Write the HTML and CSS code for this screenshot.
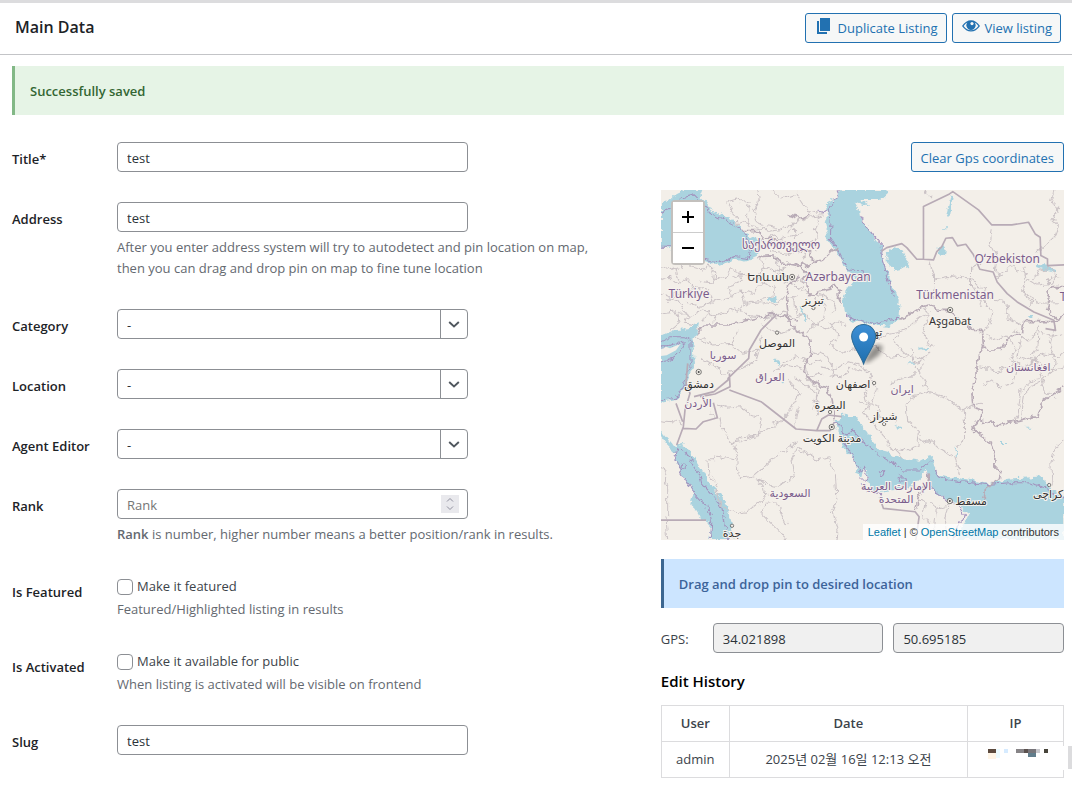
FILE: index.html
```html
<!DOCTYPE html>
<html lang="en">
<head>
<meta charset="utf-8">
<title>Main Data</title>
<meta name="viewport" content="width=device-width, initial-scale=1">
<link rel="stylesheet" href="styles.css">
</head>
<body>
<header class="panel-head">
  <h1 class="panel-title">Main Data</h1>
  <div class="actions">
    <button type="button" class="btn">
      <svg class="btn-icon" width="20" height="20" viewBox="0 0 20 20" aria-hidden="true"><path d="M6 2h10v13H6z"/><path d="M3 5h2v11h8v2H3z"/></svg>
      Duplicate Listing
    </button>
    <button type="button" class="btn">
      <svg class="btn-icon" width="20" height="20" viewBox="0 0 20 20" aria-hidden="true"><path fill-rule="evenodd" d="M1 10Q5 4.300 10 4.300T19 10Q15 15.500 10 15.500T1 10zM2.600 10Q6 14.300 10 14.300T17.400 10Q15.500 7.500 13.600 6.600A4.500 4.500 0 1 1 6.400 6.600Q4.500 7.500 2.600 10z"/><circle cx="10" cy="9.300" r="4"/><circle cx="11" cy="7.600" r="1.600" fill="#f6f7f7"/></svg>
      View listing
    </button>
  </div>
</header>
<main class="content">
  <p class="notice notice-success">Successfully saved</p>
  <div class="columns">
    <form class="fields">
      <div class="row">
        <label class="name" for="title">Title*</label>
        <div class="field"><input class="text" id="title" type="text" value="test"></div>
      </div>
      <div class="row">
        <label class="name" for="address">Address</label>
        <div class="field">
          <input class="text" id="address" type="text" value="test">
          <p class="hint">After you enter address system will try to autodetect and pin location on map, then you can drag and drop pin on map to fine tune location</p>
        </div>
      </div>
      <div class="row">
        <label class="name" for="category">Category</label>
        <div class="field"><div class="pick">
          <select class="text" id="category"><option>-</option></select>
          <svg class="pick-arrow" viewBox="0 0 27 28" aria-hidden="true"><path d="M8.500 12l5 4.500 5-4.500"/></svg>
        </div></div>
      </div>
      <div class="row">
        <label class="name" for="location">Location</label>
        <div class="field"><div class="pick">
          <select class="text" id="location"><option>-</option></select>
          <svg class="pick-arrow" viewBox="0 0 27 28" aria-hidden="true"><path d="M8.500 12l5 4.500 5-4.500"/></svg>
        </div></div>
      </div>
      <div class="row">
        <label class="name" for="agent">Agent Editor</label>
        <div class="field"><div class="pick">
          <select class="text" id="agent"><option>-</option></select>
          <svg class="pick-arrow" viewBox="0 0 27 28" aria-hidden="true"><path d="M8.500 12l5 4.500 5-4.500"/></svg>
        </div></div>
      </div>
      <div class="row">
        <label class="name" for="rank">Rank</label>
        <div class="field">
          <div class="pick">
            <input class="text" id="rank" type="number" placeholder="Rank">
            <svg class="spin" viewBox="0 0 18 18" aria-hidden="true"><path d="M6 6.500l3-3 3 3M6 11.500l3 3 3-3"/></svg>
          </div>
          <p class="hint"><strong>Rank</strong> is number, higher number means a better position/rank in results.</p>
        </div>
      </div>
      <div class="row">
        <label class="name" for="featured">Is Featured</label>
        <div class="field">
          <label class="check"><input class="box" id="featured" type="checkbox">Make it featured</label>
          <p class="hint hint-tight">Featured/Highlighted listing in results</p>
        </div>
      </div>
      <div class="row">
        <label class="name" for="activated">Is Activated</label>
        <div class="field">
          <label class="check"><input class="box" id="activated" type="checkbox">Make it available for public</label>
          <p class="hint hint-tight">When listing is activated will be visible on frontend</p>
        </div>
      </div>
      <div class="row">
        <label class="name" for="slug">Slug</label>
        <div class="field"><input class="text" id="slug" type="text" value="test"></div>
      </div>
    </form>

    <aside class="side">
      <button type="button" class="btn btn-clear">Clear Gps coordinates</button>
      <div class="map">
        <svg class="map-canvas" viewBox="0 0 403 350" preserveAspectRatio="xMidYMid slice" role="img" aria-label="Map">
          <defs>
            <linearGradient id="pin" x1="0" y1="0" x2="0" y2="1"><stop offset="0" stop-color="#3d8fd6"/><stop offset="1" stop-color="#1f6fae"/></linearGradient>
            <filter id="soft"><feGaussianBlur stdDeviation="2"/></filter>
            <filter id="rough" x="-5%" y="-5%" width="110%" height="110%">
              <feTurbulence type="fractalNoise" baseFrequency=".05" numOctaves="3" seed="4"/>
              <feDisplacementMap in="SourceGraphic" scale="22" xChannelSelector="R" yChannelSelector="G"/>
            </filter>
          </defs>
          <rect width="403" height="350" fill="#f3efe9"/>
          <g transform="scale(.33333)">
            <g class="water">
              <path d="M0 45L25 30 45 12 70 0H125L118 18 135 35 150 60 195 80 235 105 252 130 282 145 292 175 282 200 255 215 222 210 175 225 132 215 85 195 40 180 0 172z"/>
              <path d="M542 0L530 12 520 28 498 40 492 55 502 70 494 95 498 115 490 135 507 155 520 180 537 200 548 228 557 245 582 252 575 275 557 295 555 315 547 330 552 365 572 395 597 393 637 405 677 410 712 390 716 330 707 305 682 285 690 265 682 255 672 225 662 190 664 165 640 150 637 135 617 105 597 80 594 60 580 35 610 45 625 45 600 30 657 30 680 10 672 0z"/>
              <path d="M677 185L700 172 722 182 732 205 747 225 742 232 705 240 688 232 680 215z"/>
              <path d="M0 438L40 420 85 418 100 405 114 400 108 428 95 450 102 520 95 535 80 575 62 605 47 630 0 638z"/>
              <path d="M0 722L14 738 45 775 60 758 72 765 92 790 122 840 147 885 182 920 202 950 212 1000 217 1050H142L147 1010 132 990 112 975 100 955 88 945 97 910 72 870 55 838 47 820 42 785 20 765 0 738z"/>
              <path d="M522 690L540 682 552 670 562 678 585 678 597 700 617 730 635 755 657 780 677 785 697 800 737 806 777 812 795 802 812 798 822 840 837 858 897 865 940 872 977 880 1047 865 1100 862 1147 858 1157 880 1180 900 1209 920V1050H885L905 1010 924 970 897 950 877 935 857 925 827 910 812 890 802 870 797 840 787 848 777 865 747 890 700 900 657 905 625 900 617 840 607 835 600 865 590 850 582 810 565 795 545 770 540 740 530 720z"/>
              <path d="M868 20l8-5-10 62-6 4-4-8zM832 170l14-8 8 12-2 22-20-2-6-8zM325 325l20-5 10 6-12 12-8 0-12-5zM415 342l8 10 8 20 4 18-6-1-6-18zM1128 225l24 2 34 14-2 6-34-8-22-8zM840 115h18v3h-18zM775 473l32-2-2 8-22 0zM345 508l14 18-6 5-12-16zM1018 756h20v3h-20zM1090 710h26v3h-26zM883 775l5-2-1 30-3 0zM700 705l22 6 2 6-20-6zM740 520h22v4h-22zM362 577l8 4-8 3zM1100 378h12l2 6h-12z"/>
            </g>
            <path d="M0 478l15-8 12 5 32-14-14 20-28 15-17 2z" fill="#f3efe9"/>
            <g class="sealine">
              <path d="M0 70L30 50 60 25 100 15 125 40 150 70 190 90 225 108 245 122M245 122L262 150 272 178 258 205 220 200 175 216 130 208 80 188 30 172 0 172"/>
              <path d="M536 0L512 45 480 72 470 60M503 50L510 90 508 145 525 170 540 200 560 240 600 242 610 260"/>
              <path d="M597 75L615 105 640 140 664 165 662 195 672 230 676 260 690 300 700 320M552 375L575 385 600 388 640 402 712 385"/>
              <path d="M0 455L30 440 70 440 90 450 90 520 70 580 45 625 0 630M0 470L25 470 60 455 70 462 55 490 20 512 0 515"/>
              <path d="M48 775L42 800 60 850 95 905 118 930 140 950 150 985 145 1050M60 775L75 785 100 830 115 850 122 880 150 910 180 945 192 1000 200 1050"/>
              <circle cx="65" cy="830" r="8"/><circle cx="663" cy="852" r="8"/><circle cx="722" cy="868" r="8"/>
              <path d="M520 690L560 735 575 720 610 760 650 790 700 820 727 840 777 840 812 812 M822 840L837 865 900 875 977 883 1047 878 1100 878 1150 890 1209 930M797 850L815 895 850 925 890 948 910 972 890 1010 875 1050"/>
              <path d="M535 740L560 775 580 810 600 845 610 830 620 870 597 870M600 880L620 905 660 915"/>
            </g>
            <g class="minor">
              <path d="M200 35l30-8 12 10 18-2 8 25-12 18 10 25-18-8-20 8-2-22-12-14-14-32M290 0l5 30-18 35 20 40 70 10 28-10M330 0l30 28 45-15 30 45 45 15M380 130l20-30 35-18 45-4-20 40 12 25-22 10 20 30M300 150l40-15 25 12 60-20M320 165l12 20 48 8 25-18 30 10M400 115l5 55 30 15-8 20M265 110l60 14 40-6"/>
              <path d="M0 235l30-6 22 12 15-30M0 270l25-8 25 22 28-18 20 26-15 20-40 0-25 26M85 195l5 35 35 10 15-18 25 30-10 28-42-8M142 222l15 40 40 4 10-30 30 12 5 25-40 12 8 28M98 292l45 10 10 35-40 12-38-12M155 337l50-12 35-25 40 12 20-30 40 10-5 30-60 10-45 30M210 265l35-12 45 8 20-30 40 15 25-15M240 300l10 40 55-5 40 12 20-20 45-10M300 200l8 30-16 35M340 200l15 45 25 12M0 370l45-8 40 18 40-20 40 16 60-20 50 22 50 5 40-20 30 16M45 362l10 35-30 25M85 380l-12 20 27 5M165 376l-10 22M0 310l50 20 30 45M365 280l25-8 10 20 20 4M350 250l60 25M45 240l10 40M125 395l10-25M330 365l20 25"/>
              <path d="M415 265l10 15-2 20 25 18 22-12M395 320l12 60 25-8 28 30 25-10 10-42-30-20-5-25M465 310l52 20 10 30-20 15M440 430l20-30 40 15 30-25 25 20M505 395l25 40-20 30 30 25 55-15 20-22M455 485l40 10 22 35-8 25 30 5 30-25 40 8M595 460l30 4 50-32 60-15 40-35 30-18M597 480l45-8 40 30 60-5 40 12 22-20M710 430l-10 30 40 35M790 350l15 30-20 40 15 40 20 12M805 215l15 40 0 30-5 40M820 270l60-12 55 12 25 25M960 225l-32 10 0 55 40 5 15 30 50 10 8 50 40 20 0 40M935 290l25 40 -5 20 M960 320l35 50-15 40-25 20"/>
              <path d="M990 115l-5 45 20 40-5 40 25 20M1085 230l10 35 30 20 45-5 20-25-20-20-35 5-20 30M1080 300l55 40 55-2M1005 260l45-30 50 25M1178 0l-6 30 18 30-18 30 20 18-10 30-40 38-16 14M790 0l8 15M1095 270l-10 40 30 25-15 15M1157 285l15-25 25 5M810 22l-20-22"/>
              <path d="M300 400l50 30 50-12 30 20M102 440l50 25 60-5 30 30 50-10M212 460l20-38M302 440l-20 70-50 30-45 10-30-25-35-20M480 510l-30 10-45-20 -40 15M335 545l40-20 45 8 15 30 45-10M385 570l30 40-40 70-40 20M400 560l65 50 5 70M430 520l10 45 35 35 -20 60M482 530l40 10 40-25 45 15 25 30-20 45 10 35"/>
              <path d="M687 590l20-20 45-10 35-35M750 475l5 40 50 92-55 15-15 25 5 45 35 30-5 45-40 15-40-5M805 607l50 15 50 40 5 30 0 55-20 30M770 745l20 15 20-8 25 22 50 30 10 50M905 660l25-15 30-5M790 510l-35 10M620 640l30 10 10 35 40-15 10 30M597 635l25 10-10 25 20 25 50 65 40 45M627 565l20 35 -20 40M1070 520l-15 60-40 10-20-20-30 10M1120 500l20 60-60 35-10 80-25 30M1150 570l-40 20-20 20-10 80M1175 540l-35 30 10 35 35 20M1209 750l-25 20-15 45 3 70M955 530l50 15 50-20 30 10 40-25M970 430l35 20 30-15 30 40-15 30 30 20M1060 420l40 30 30-25 40 15 39-10M1080 450l-10 50 40 10 30-20 50 10 19-15M1135 410l-5 60-20 30M1180 410l-15 50 20 60-20 30M1040 510l50 20 30-20 60 30 29-10"/>
              <path d="M165 645l30 10 45-5 30 25 30 10-8 50-50 5-25 20-35-45-5-30-35-15M212 760l25-5 50-20 70-40 25-20M215 755l15 55 5 55 45-8 50-45 55-40 25-20M228 810l-65-12-10 15-12-2 2 35 25 35-5 15M165 900l20 50 45 20 35-8 50-40-5-35-22-20M285 865l60 25 55-30-10-45 20-40 60 35 35-10 18 55 5 80-12 30 15 60-5 35M315 940l30-5 35 70M315 935l-10 40 50 50 20 25 M0 692l45 5 20 5M0 832l12 10-2 35 10 5v95M15 980l5 70M400 710l12-60"/>
              <path d="M790 945l-5 40 20 15-10 50M860 950l-10 40 10 60M810 940l20 15 45-15M775 930l20 5-5 20M825 960l-5 60-15 30"/>
            </g>
            <g class="border border-rough">
              <path d="M245 122l45 0 20 20 60 15 50 30 25-8M292 200l40-2 35 25 45 0 25 30-15 15M382 225l30 5 12-10 20 12 15-15M380 75l40 10 30-15M445 185l15 30 30-10 20-20 25-10"/>
              <path d="M415 262l-30 20-10 30 8 80 22 25 35 25 12 50-20 35-5 20 30 30 40 18 15 30 10 60M425 275l20 20-2 25 30-15 40-8 10-15 15 20-10 10 12 30M112 420l18-15 70 0 90-20 45-12 40 10 30 10M130 405l-22 25"/>
              <path d="M712 388l30-12 35-22 40-8 15 15 30 0 30 25 40 35 32 0 3 50-15 25-7 50-1 20-12 35 3 50 28 8-2 20-25 32 5 10 45 40 15 30 0 40 18 15-5 20-40 25-8 50M965 465l10 15 40 0 40-45 25-5 10-35 100 0 19-30M955 692l60 12 60-10 55-15 10-38 35-30 34-20M762 960l15-50 20-30 5-30"/>
              <path d="M1209 290l-40 0-12 20 12 20-10 30 30 30"/>
            </g>
            <g class="border">
              <path d="M345 375l-45 45-35 60-2 25-62 60 0 5-42 35-60 15M205 550l2 40-45 22-45 8M205 600l95 35 105 82 62 5 15-35 20-12 40 5M467 722h40l12-25M80 520l-5 60 12 30-15 50-5 50-20 55M65 715l40 2 22-22 42-12-12-45M0 990h135M45 640l20 55M655 920l12 35 95 10 12 15-10 70"/>
              <path d="M787 208V50L865 12 875 5 952 60 992 105l60 0 50-8 20 35 15 10 2 55 20 10 0 20 50-2M787 208l-20 0-30-35-15-12-45 12-15 10M787 208l30 2 10-25 15-15 12-25 20-2 15 25 25-5 22 30 20 45 40 8 12 30 30 35 30 25 50 30 60 25 5 30-30-5"/>
            </g>
            <g class="towns">
              <circle cx="393" cy="261" r="8"/><circle cx="867" cy="360" r="8"/><circle cx="113" cy="546" r="8"/><circle cx="512" cy="711" r="8"/><circle cx="866" cy="933" r="8"/>
              <circle cx="457" cy="354" r="5"/><circle cx="348" cy="428" r="5"/><circle cx="507" cy="666" r="5"/><circle cx="213" cy="1007" r="5"/><circle cx="639" cy="579" r="5"/><circle cx="669" cy="702" r="5"/><circle cx="1164" cy="885" r="5"/>
            </g>
            <g fill="#444"><circle cx="393" cy="261" r="3"/><circle cx="867" cy="360" r="3"/><circle cx="113" cy="546" r="3"/><circle cx="512" cy="711" r="3"/><circle cx="866" cy="933" r="3"/></g>
          </g>
          <g class="country country-wide">
            <text x="120" y="59">საქართველო</text>
            <text x="177" y="91">Azərbaycan</text>
            <text x="28" y="108">Türkiye</text>
            <text x="346" y="73">Oʻzbekiston</text>
            <text x="294" y="109">Türkmenistan</text>
            <text x="402" y="111">T</text>
          </g>
          <g class="country">
            <text x="62" y="169">سوريا</text>
            <text x="109" y="191">العراق</text>
            <text x="37" y="217">الأردن</text>
            <text x="129" y="307">السعودية</text>
            <text x="241" y="203">ایران</text>
            <text x="367" y="181">افغانستان</text>
            <text x="235" y="300">الإمارات العربية</text>
            <text x="235" y="313">المتحدة</text>
          </g>
          <g class="city">
            <text x="107" y="91">Երևան</text>
            <text x="289" y="135">Aşgabat</text>
            <text x="152" y="114">تبریز</text>
            <text x="116" y="157">الموصل</text>
            <text x="38" y="198">دمشق</text>
            <text x="169" y="219">البصرة</text>
            <text x="171" y="252">مدينة الكويت</text>
            <text x="192" y="198">اصفهان</text>
            <text x="214" y="146">تهر</text>
            <text x="223" y="230">شیراز</text>
            <text x="310" y="315">مسقط</text>
            <text x="387" y="308">کراچی</text>
            <text x="71" y="347">جدة</text>
          </g>
          <path d="M202 173l8-14 7-5 5 3-4 8-10 7z" fill="#000" opacity=".4" filter="url(#soft)"/>
          <path d="M202.500 174C199 164 190.500 155 190.500 146.500a12 12 0 0 1 24 0C214.500 155 206 164 202.500 174z" fill="url(#pin)" stroke="#2e6c97"/>
          <circle cx="202.500" cy="147" r="4.500" fill="#fff"/>
        </svg>
        <div class="zoom">
          <button type="button" class="zoom-btn" aria-label="Zoom in"><svg width="14" height="14" viewBox="0 0 14 14"><path d="M1 7h12M7 1v12"/></svg></button>
          <button type="button" class="zoom-btn" aria-label="Zoom out"><svg width="14" height="14" viewBox="0 0 14 14"><path d="M1 7h12"/></svg></button>
        </div>
        <div class="credit"><a href="#">Leaflet</a> | © <a href="#">OpenStreetMap</a> contributors</div>
      </div>
      <p class="notice notice-info">Drag and drop pin to desired location</p>
      <div class="gps">
        <label class="gps-name" for="lat">GPS:</label>
        <input class="text readonly" id="lat" type="text" value="34.021898" readonly>
        <input class="text readonly" type="text" value="50.695185" aria-label="Longitude" readonly>
      </div>
      <h2 class="history-title">Edit History</h2>
      <table class="history">
        <thead><tr><th class="c-user">User</th><th>Date</th><th class="c-ip">IP</th></tr></thead>
        <tbody><tr><td>admin</td><td lang="ko">2025년 02월 16일 12:13 오전</td><td class="masked">
          <svg class="mask" width="104" height="24" viewBox="0 0 104 24" aria-hidden="true">
            <path d="M90 0h10v24H90z" fill="#fff"/><path d="M100 0h4v23h-4z" fill="#dcdcde"/>
            <path d="M20 3h8v4h-8z" fill="#5c4a3e"/><path d="M20 7h8v6h-8z" fill="#fff5e6"/><path d="M28 3h4v9h-4z" fill="#ecfbff"/><path d="M36 3h4v4h-4z" fill="#d6ebff"/>
            <path d="M48 3h8v4h-8z" fill="#878487"/><path d="M56 3h4v4h-4z" fill="#5b514e"/><path d="M60 3h8v4h-8z" fill="#77757a"/><path d="M60 7h8v4h-8z" fill="#617d8c"/><path d="M68 3h4v4h-4z" fill="#c9c9ce"/><path d="M76 3h4v4h-4z" fill="#47443a"/>
          </svg>
        </td></tr></tbody>
      </table>
    </aside>
  </div>
</main>
</body>
</html>
```
FILE: styles.css
```css
* { box-sizing: border-box; }
body {
  margin: 0;
  background: #fff;
  color: #3c434a;
  font: 13px/21px "Open Sans", "Noto Sans CJK KR", sans-serif;
}
p, h1, h2 { margin: 0; }
input, select, button { font: inherit; }

.panel-head {
  display: flex;
  align-items: center;
  justify-content: space-between;
  min-height: 55px;
  padding: 0 11px 2px 15px;
  border-top: 3px solid #dcdcde;
  border-bottom: 1px solid #c3c4c7;
}
.panel-title { font-size: 16px; font-weight: 600; color: #1d2327; }
.actions { display: flex; gap: 5px; }
.btn {
  display: inline-flex;
  align-items: center;
  gap: 4px;
  height: 30px;
  padding: 2px 8px 0;
  border: 1px solid #2271b1;
  border-radius: 3px;
  background: #f6f7f7;
  color: #2271b1;
  white-space: nowrap;
}
.btn-icon { fill: #2271b1; margin-bottom: 6px; }

.content { padding: 11px 8px 16px 12px; }
.notice {
  padding: 15px 15px 13px;
  border-left: 3px solid;
  font-weight: 600;
}
.notice-success { background: #e6f4e6; border-color: #82b886; color: #336633; }
.notice-info { background: #cce5ff; border-color: #3c6690; color: #3c6399; margin-top: 19px; }

.columns {
  display: grid;
  grid-template-columns: 3fr 2fr;
  gap: 44px;
  padding-top: 27px;
}
.fields { display: flex; flex-direction: column; gap: 30px; }
.row { display: grid; grid-template-columns: 105px 1fr; }
.name { padding-top: 5px; line-height: 24px; font-weight: 600; color: #1d2327; }
.field { min-width: 0; }
.text {
  display: block;
  width: 100%;
  max-width: 351px;
  height: 30px;
  padding: 2px 9px 0;
  border: 1px solid #8c8f94;
  border-radius: 4px;
  background: #fff;
  color: #2c3338;
  appearance: none;
}
.text::placeholder { color: #757575; opacity: 1; }
input[type="number"] { appearance: textfield; }
.pick { position: relative; max-width: 351px; }
.pick-arrow {
  position: absolute;
  top: 1px;
  right: 1px;
  width: 27px;
  height: 28px;
  border-left: 1px solid #8c8f94;
  fill: none;
  stroke: #50575e;
  stroke-width: 2;
  pointer-events: none;
}
.spin {
  position: absolute;
  top: 6px;
  right: 9px;
  width: 18px;
  height: 18px;
  background: #e9e9ed;
  fill: none;
  stroke: #8f8f9d;
  pointer-events: none;
}
.hint { margin-top: 5px; color: #646970; }
.hint strong { font-weight: 600; }
.hint-tight { margin-top: 1px; }
.check { display: flex; align-items: center; gap: 4px; line-height: 23px; }
.box {
  appearance: none;
  width: 16px;
  height: 16px;
  margin: 0;
  border: 1px solid #8c8f94;
  border-radius: 4px;
  background: #fff;
}

.side { display: flex; flex-direction: column; min-width: 0; }
.btn-clear { align-self: flex-end; padding: 2px 9px 0; }
.map { position: relative; height: 350px; margin-top: 18px; overflow: hidden; }
.map-canvas { display: block; width: 100%; height: 100%; }
.water { fill: #aad3df; filter: url(#rough); }
.sealine { fill: none; stroke: #a291bd; stroke-width: 3; filter: url(#rough); }
.minor { fill: none; stroke: #cbc3c6; stroke-width: 3; stroke-linejoin: round; filter: url(#rough); }
.border { fill: none; stroke: #b8abb6; stroke-width: 5; stroke-linejoin: round; }
.border-rough { filter: url(#rough); }
.towns { fill: #f3efe9; stroke: #444; stroke-width: 2; }
.country, .city {
  font-family: "Noto Sans", "DejaVu Sans", sans-serif;
  font-size: 11px;
  text-anchor: middle;
  paint-order: stroke;
  stroke: #f6f2ee;
  stroke-width: 2px;
}
.country { fill: #7b5d8c; }
.country-wide { font-size: 12px; }
.city { fill: #333; }
.zoom {
  position: absolute;
  top: 10px;
  left: 10px;
  border: 2px solid #c3c0bd;
  border-radius: 4px;
}
.zoom-btn {
  display: grid;
  place-items: center;
  width: 30px;
  height: 30px;
  padding: 0;
  border: 0;
  background: #fff;
  stroke: #000;
  stroke-width: 2;
}
.zoom-btn + .zoom-btn { border-top: 1px solid #ccc; height: 31px; }
.credit {
  position: absolute;
  right: 0;
  bottom: 0;
  padding: 0 5px;
  background: rgba(255, 255, 255, .8);
  color: #333;
  font: 11px/16px "Liberation Sans", Arial, sans-serif;
}
.credit a { color: #0078a8; text-decoration: none; }

.gps { display: grid; grid-template-columns: 42px 1fr 1fr; gap: 10px; margin-top: 15px; }
.gps-name { line-height: 32px; }
.readonly { background: #f0f0f0; }
.history-title {
  margin: 15px 0 12px;
  font-size: 15px;
  line-height: 23px;
  font-weight: 600;
  color: #000;
}
.history { width: 100%; table-layout: fixed; border-collapse: collapse; text-align: center; }
.history th, .history td { height: 36px; padding: 0; border: 1px solid #dcdcde; }
.history th { font-weight: 600; }
.c-user { width: 68px; }
.c-ip { width: 96px; }
.masked { position: relative; }
.mask { position: absolute; top: 4px; left: 0; }
```
